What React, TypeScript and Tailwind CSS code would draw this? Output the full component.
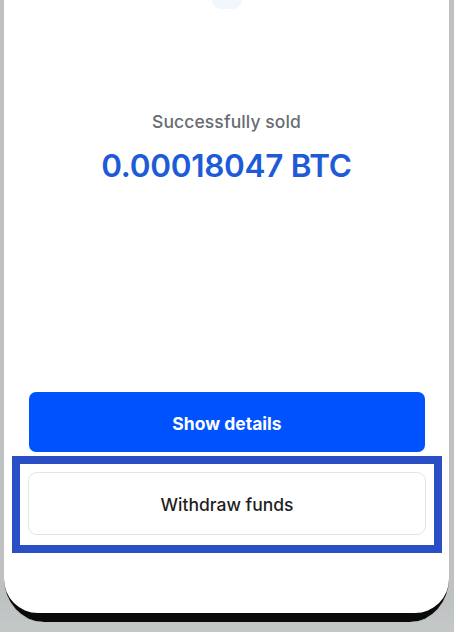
import React from 'react';

const App: React.FC = () => {
  return (
    <div
      className="w-[454px] h-[632px] overflow-hidden flex flex-col bg-gradient-to-b from-[#5a5c5c] to-[#c4c8c8]"
      style={{ fontFamily: 'Inter, "Noto Sans", sans-serif' }}
    >
      {/* phone frame: side rails + black bezel */}
      <div className="flex flex-col bg-[#0a0a0a] rounded-b-[44px] pb-[9px] border-l-[4px] border-r-[5px] border-[#bfc1c1]">
        {/* screen */}
        <div className="h-[613px] bg-white rounded-b-[34px] flex flex-col">
          {/* cut-off icon at the top */}
          <div className="flex justify-center">
            <div className="w-[30px] h-[9px] rounded-b-full bg-[#eaf0fc] opacity-60" />
          </div>

          <div className="mt-[101px] flex flex-col items-center">
            <p className="text-[17.5px] leading-[24px] font-medium text-[#686c73] tracking-[0.1px]">
              Successfully sold
            </p>
            <p className="mt-[12px] text-[31.5px] leading-[40px] font-semibold text-[#1e5bd7] tracking-[-0.3px]">
              0.00018047 BTC
            </p>
          </div>

          <div className="flex-1" />

          <button className="ml-[25px] mr-[24px] h-[60px] pt-[4px] rounded-[7px] bg-[#0052ff] text-white text-[17.5px] font-bold">
            Show details
          </button>

          {/* highlight frame */}
          <div className="mt-[4px] ml-[8px] mr-[7px] border-[8px] border-[#2a4fc4] pt-[8px] pb-[10px] px-[8px]">
            <button className="w-full h-[63px] pt-[3px] rounded-[9px] border border-[#e4e4e6] bg-white text-[17.5px] font-medium text-[#1f1f1f]">
              Withdraw funds
            </button>
          </div>

          <div className="h-[60px]" />
        </div>
      </div>
    </div>
  );
};

export default App;
